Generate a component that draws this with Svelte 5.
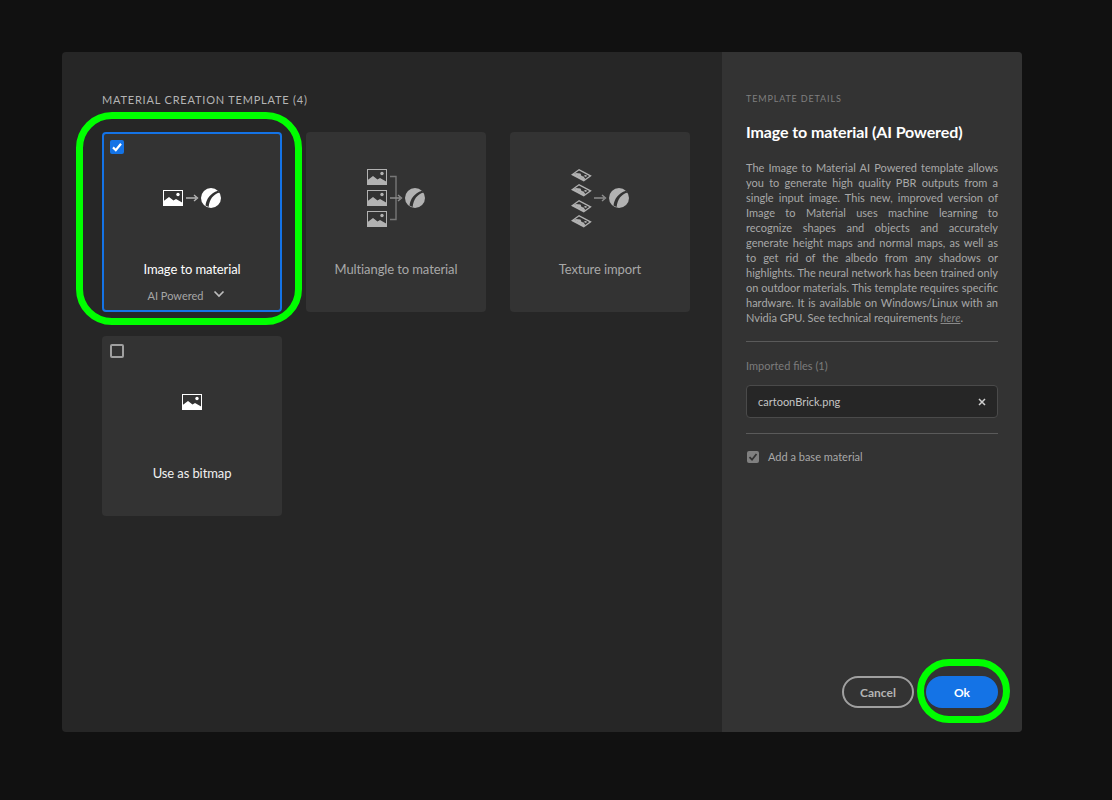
<script>
  const lines = [
    'The Image to Material AI Powered template allows',
    'you to generate high quality PBR outputs from a',
    'single input image. This new, improved version of',
    'Image to Material uses machine learning to',
    'recognize shapes and objects and accurately',
    'generate height maps and normal maps, as well as',
    'to get rid of the albedo from any shadows or',
    'highlights. The neural network has been trained only',
    'on outdoor materials. This template requires specific',
    'hardware. It is available on Windows/Linux with an'
  ];
</script>

{#snippet picture(x, y, fill)}
  <g transform="translate({x} {y})">
    <rect x="0.5" y="0.5" width="19" height="15" fill="none" stroke={fill} />
    <circle cx="15" cy="4.5" r="1.7" fill={fill} />
    <path d="M0 16V11.5L6 7L10.5 10.5L13 9L20 13V16Z" fill={fill} />
  </g>
{/snippet}

{#snippet ball(x, y, fill, bg)}
  <g transform="translate({x} {y})">
    <circle cx="10" cy="10" r="10" fill={fill} />
    <path d="M4.5 17.5C5.2 11.5 9 5.2 17 2.8L18.6 4.6C12 6.5 8.6 11.5 7.6 19Z" fill={bg} />
  </g>
{/snippet}

{#snippet arrow(x, y, fill)}
  <path d="M{x} {y}h10M{x + 8} {y - 3}l3.5 3l-3.5 3" fill="none" stroke={fill} stroke-width="1.4" />
{/snippet}

{#snippet tilted(x, y, fill)}
  <g transform="translate({x} {y}) matrix(.64 .34 -.5 .36 8 0)">
    <rect width="20" height="16" fill={fill} />
    <rect x="2" y="2.5" width="16" height="9" fill="#333" />
    <circle cx="14.5" cy="5.5" r="1.6" fill={fill} />
    <path d="M2 12V9L7 6L11 9L13.5 8L18 10.5V12Z" fill={fill} />
  </g>
{/snippet}

<div class="dialog">
  <section class="left">
    <h2>MATERIAL CREATION TEMPLATE (4)</h2>
    <div class="grid">
      <div class="card selected">
        <span class="check on">
          <svg width="14" height="14" viewBox="0 0 14 14"><path d="M3 7.4L5.8 10.2L11 3.8" fill="none" stroke="#fff" stroke-width="2.2" /></svg>
        </span>
        <svg class="icon small" width="60" height="20" viewBox="0 0 60 20">
          {@render picture(1, 2, '#fff')}
          {@render arrow(24, 10, '#b4b4b4')}
          {@render ball(39, 0, '#fff', '#333')}
        </svg>
        <div class="name">Image to material</div>
        <div class="sub">
          <span>AI Powered</span>
          <svg width="12" height="8" viewBox="0 0 12 8"><path d="M1.5 1.5L6 6L10.5 1.5" fill="none" stroke="#bdbdbd" stroke-width="1.7" /></svg>
        </div>
      </div>

      <div class="card dim">
        <svg class="icon tall" width="60" height="60" viewBox="0 0 60 60">
          {@render picture(1, 0, '#b2b2b2')}
          {@render picture(1, 21, '#b2b2b2')}
          {@render picture(1, 42, '#b2b2b2')}
          <path d="M24 7.5H30V50.5H24" fill="none" stroke="#777" stroke-width="1.4" />
          {@render arrow(24, 29, '#8d8d8d')}
          {@render ball(39, 19, '#b2b2b2', '#333')}
        </svg>
        <div class="name">Multiangle to material</div>
      </div>

      <div class="card dim">
        <svg class="icon tall" width="60" height="60" viewBox="0 0 60 60">
          {@render tilted(1, 0, '#b2b2b2')}
          {@render tilted(1, 15, '#b2b2b2')}
          {@render tilted(1, 31, '#b2b2b2')}
          {@render tilted(1, 46, '#b2b2b2')}
          {@render arrow(24, 29, '#8d8d8d')}
          {@render ball(39, 19, '#b2b2b2', '#333')}
        </svg>
        <div class="name">Texture import</div>
      </div>

      <div class="card">
        <span class="check"></span>
        <svg class="icon small" width="60" height="20" viewBox="0 0 60 20">
          {@render picture(20, 2, '#fff')}
        </svg>
        <div class="name">Use as bitmap</div>
      </div>
    </div>
    <div class="ring card-ring"></div>
  </section>

  <aside class="right">
    <h3>TEMPLATE DETAILS</h3>
    <h1>Image to material (AI Powered)</h1>
    <p class="desc">
      {#each lines as line}<span class="line">{line}</span>{/each}
      <span class="last">Nvidia GPU. See technical requirements <a href="#here">here</a>.</span>
    </p>
    <hr class="rule-a" />
    <div class="files-label">Imported files (1)</div>
    <div class="file">
      <span>cartoonBrick.png</span>
      <svg width="8" height="8" viewBox="0 0 8 8"><path d="M1 1L7 7M7 1L1 7" stroke="#d0d0d0" stroke-width="1.5" /></svg>
    </div>
    <hr class="rule-b" />
    <label class="base">
      <span class="mini">
        <svg width="12" height="12" viewBox="0 0 12 12"><path d="M2.5 6.2L5 8.7L9.5 3" fill="none" stroke="#333" stroke-width="1.8" /></svg>
      </span>
      <span>Add a base material</span>
    </label>
    <div class="actions">
      <button class="cancel">Cancel</button>
      <button class="ok">Ok</button>
      <div class="ring ok-ring"></div>
    </div>
  </aside>
</div>

<style>
  :global(body) {
    margin: 0;
    background: #111111;
  }
  .dialog {
    box-sizing: border-box;
    width: 960px;
    height: 680px;
    margin: 52px 0 0 62px;
    display: flex;
    border-radius: 4px;
    overflow: hidden;
    background: #262626;
    font-family: Lato, "Noto Sans", sans-serif;
  }
  .left {
    position: relative;
    box-sizing: border-box;
    width: 660px;
    padding: 41px 0 0 40px;
  }
  h2 {
    margin: 0 0 25px;
    font-size: 11px;
    line-height: 14px;
    font-weight: 400;
    letter-spacing: 0.8px;
    color: #b4b4b4;
  }
  .grid {
    display: grid;
    grid-template-columns: repeat(3, 180px);
    grid-auto-rows: 180px;
    gap: 24px;
  }
  .card {
    position: relative;
    box-sizing: border-box;
    background: #333333;
    border-radius: 4px;
    display: flex;
    flex-direction: column;
    align-items: center;
    padding-top: 56px;
    color: #f0f0f0;
  }
  .card.selected {
    border: 2px solid #1473e6;
    padding-top: 54px;
  }
  .card.dim {
    color: #a8a8a8;
    padding-top: 37px;
  }
  .card.dim .name {
    margin-top: 30px;
  }
  .icon {
    display: block;
    flex: none;
  }
  .name {
    margin-top: 51px;
    font-size: 13px;
    line-height: 20px;
    letter-spacing: -0.1px;
  }
  .selected .name {
    color: #fff;
  }
  .sub {
    margin-top: 9px;
    padding-right: 11px;
    display: flex;
    align-items: center;
    gap: 10px;
    font-size: 11px;
    line-height: 16px;
    color: #a6a6a6;
  }
  .sub svg {
    margin-top: -4px;
  }
  .check {
    position: absolute;
    left: 8px;
    top: 8px;
    box-sizing: border-box;
    width: 14px;
    height: 14px;
    border: 2px solid #a0a0a0;
    border-radius: 2px;
  }
  .selected .check {
    left: 6px;
    top: 6px;
  }
  .check.on {
    border: 0;
    background: #1473e6;
  }
  .check svg {
    display: block;
  }
  .ring {
    position: absolute;
    box-sizing: border-box;
    border: 7px solid #00ff00;
    pointer-events: none;
  }
  .card-ring {
    left: 14px;
    top: 60px;
    width: 226px;
    height: 213px;
    border-radius: 36px;
  }
  .right {
    box-sizing: border-box;
    width: 300px;
    padding: 41px 24px 0;
    background: #333333;
    display: flex;
    flex-direction: column;
    position: relative;
  }
  h3 {
    margin: 0;
    font-size: 9px;
    line-height: 12px;
    font-weight: 400;
    letter-spacing: 0.85px;
    color: #7f7f7f;
  }
  h1 {
    margin: 16px 0 0;
    font-size: 16px;
    line-height: 22px;
    font-weight: 700;
    letter-spacing: -0.1px;
    color: #fff;
  }
  .desc {
    margin: 17px 0 0;
    font-size: 11px;
    line-height: 15px;
    color: #a8a8a8;
  }
  .line {
    display: block;
    text-align: justify;
    text-align-last: justify;
    white-space: normal;
  }
  .last {
    display: block;
    white-space: nowrap;
  }
  a {
    color: #8a8a8a;
    font-style: italic;
    text-decoration: underline;
  }
  hr {
    width: 100%;
    height: 1px;
    margin: 0;
    border: 0;
    background: #5a5a5a;
    flex: none;
  }
  .rule-a {
    margin-top: 16px;
  }
  .files-label {
    margin-top: 16px;
    font-size: 11px;
    line-height: 16px;
    color: #7c7c7c;
  }
  .file {
    margin-top: 11px;
    box-sizing: border-box;
    height: 33px;
    background: #262626;
    border: 1px solid #4a4a4a;
    border-radius: 4px;
    padding: 0 11px;
    display: flex;
    align-items: center;
    justify-content: space-between;
    font-size: 11px;
    color: #c4c4c4;
  }
  .rule-b {
    margin-top: 15px;
  }
  .base {
    margin-top: 16px;
    display: flex;
    align-items: center;
    gap: 9px;
    font-size: 11px;
    line-height: 14px;
    color: #a8a8a8;
  }
  .mini {
    width: 12px;
    height: 12px;
    margin-left: 1px;
    border-radius: 2px;
    background: #808080;
  }
  .mini svg {
    display: block;
  }
  .actions {
    position: absolute;
    right: 24px;
    bottom: 24px;
    display: flex;
    gap: 12px;
  }
  button {
    box-sizing: border-box;
    width: 72px;
    height: 32px;
    border-radius: 16px;
    font-family: inherit;
    font-size: 12px;
    font-weight: 700;
    padding: 0;
  }
  .cancel {
    background: transparent;
    border: 2px solid #a0a0a0;
    color: #b4b4b4;
  }
  .ok {
    border: 0;
    background: #1473e6;
    color: #fff;
  }
  .ok-ring {
    right: -12px;
    top: -17px;
    width: 93px;
    height: 64px;
    border-radius: 32px;
  }
</style>
